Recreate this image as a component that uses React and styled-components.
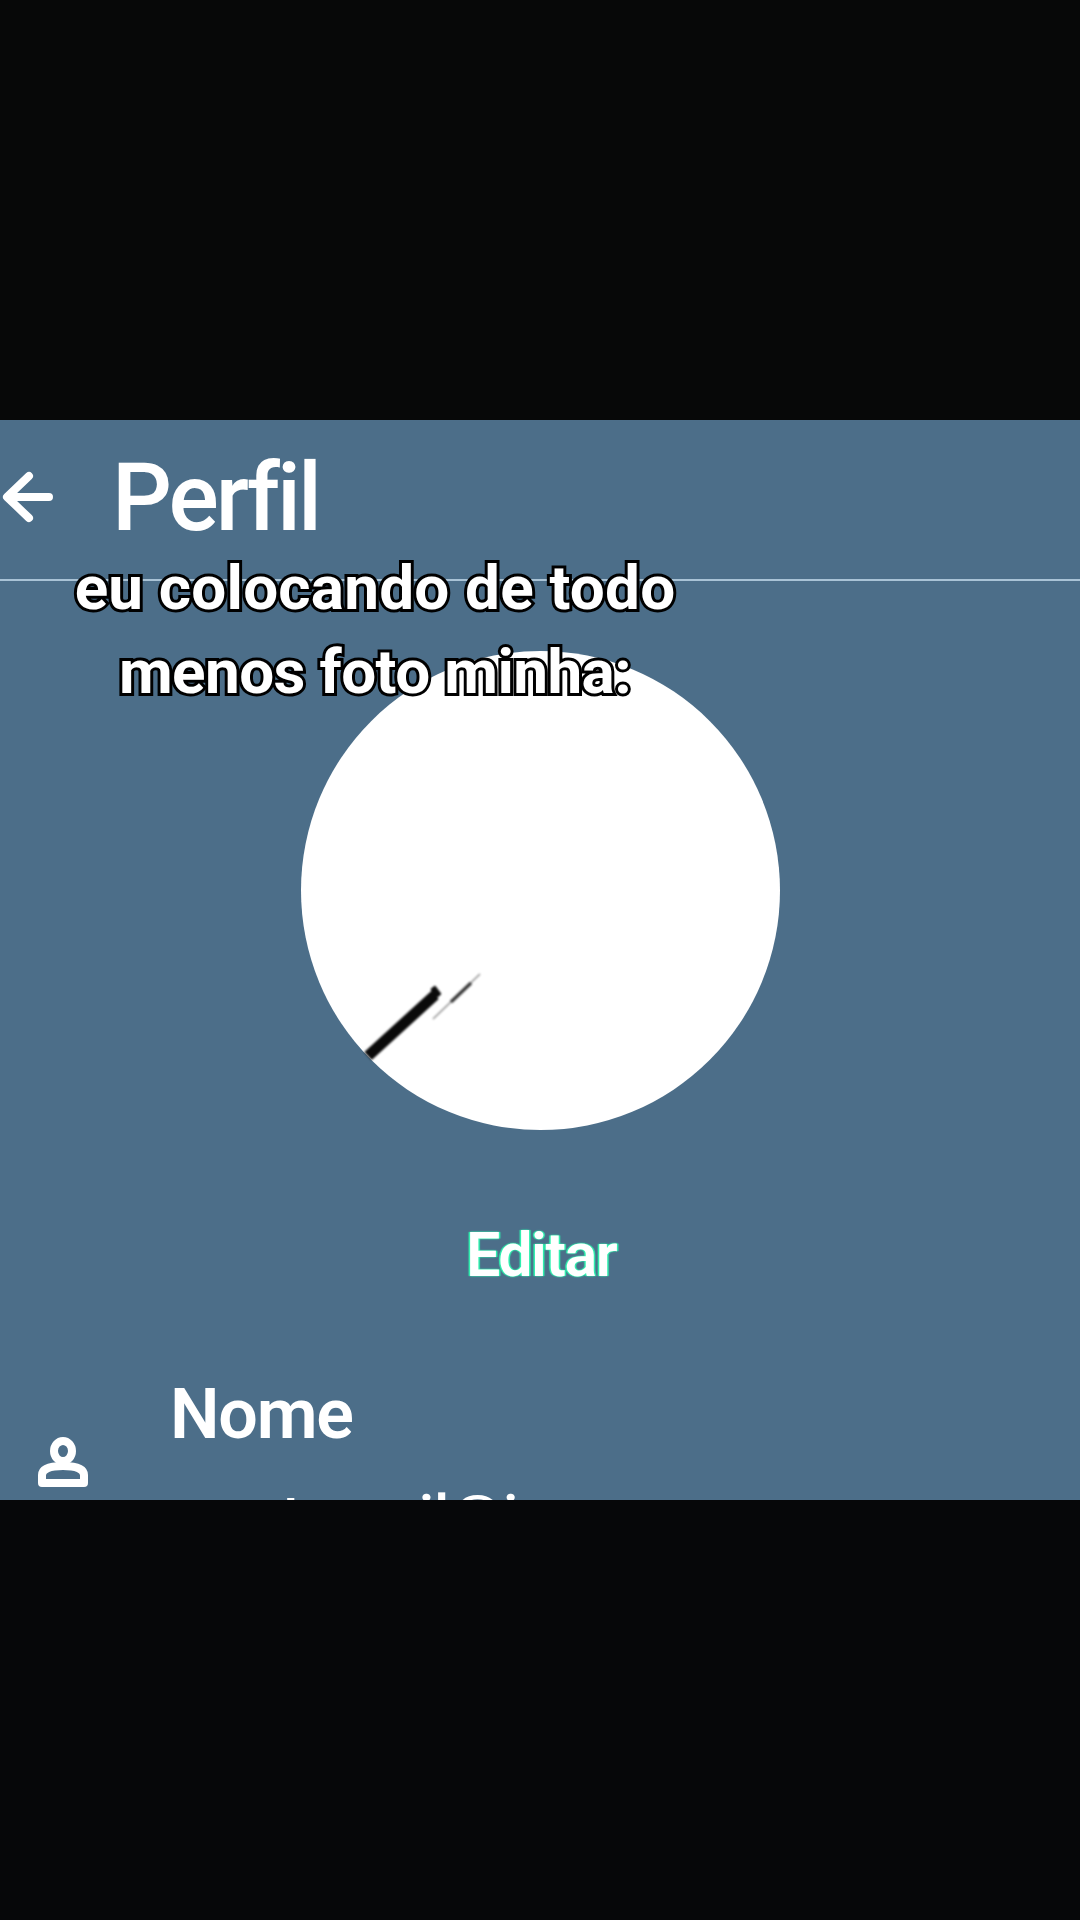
import React from "react";
import styled, { createGlobalStyle } from "styled-components";

const Global = createGlobalStyle`
  html, body { margin: 0; padding: 0; background: #060708; }
  body { font-family: Roboto, "Liberation Sans", sans-serif; }
`;
const Page = styled.div`
  position: relative;
  width: 1080px;
  height: 1920px;
  display: flex;
  flex-direction: column;
  background: linear-gradient(#070808 0 50%, #060709 50% 100%);
  overflow: hidden;
`;
const Panel = styled.main`
  margin-top: 420px;
  height: 1080px;
  background: #4c6e89;
  color: #fff;
  display: flex;
  flex-direction: column;
  overflow: hidden;
`;
const Header = styled.header`
  flex: none;
  height: 159px;
  display: flex;
  align-items: flex-start;
  border-bottom: 2px solid #a9c3d6;
`;
const BackIcon = styled.svg`
  width: 56px;
  height: 56px;
  margin: 49px 0 0 0;
  flex: none;
`;
const Title = styled.h1`
  margin: 23px 0 0 56px;
  font-size: 94px;
  line-height: 110px;
  font-weight: 500;
  letter-spacing: -3px;
`;
const Avatar = styled.div`
  position: relative;
  flex: none;
  width: 479px;
  height: 479px;
  margin: 70px 0 0 301px;
  border-radius: 50%;
  background: #fff;
`;
const Mark = styled.svg`
  position: absolute;
  left: 60px;
  top: 320px;
  width: 130px;
  height: 95px;
  filter: blur(0.8px);
`;
const EditLink = styled.div`
  margin-top: 90px;
  text-align: center;
  padding-left: 2px;
  font-size: 61px;
  line-height: 70px;
  font-weight: 600;
  letter-spacing: -1.5px;
  color: #fff;
  text-shadow: 0 0 2px #2ff5b0, 1.5px 0 1px #2ff5b0, -1.5px 0 1px #2ff5b0;
`;
const Row = styled.section`
  margin-top: 83px;
  display: flex;
  padding-left: 38px;
`;
const UserIcon = styled.svg`
  flex: none;
  width: 50px;
  height: 50px;
  margin-top: 64px;
`;
const Fields = styled.div`
  margin-left: 82px;
  display: flex;
  flex-direction: column;
`;
const Label = styled.div`
  font-size: 70px;
  line-height: 82px;
  font-weight: 600;
  letter-spacing: -1.2px;
`;
const Value = styled.div`
  margin: 27px 0 0 13px;
  font-size: 60px;
  line-height: 70px;
  font-weight: 500;
  white-space: nowrap;
`;
const Caption = styled.div`
  position: absolute;
  left: 0;
  top: 546px;
  width: 750px;
  text-align: center;
  font-family: Roboto, sans-serif;
  font-size: 62px;
  line-height: 84px;
  font-weight: 700;
  color: #fff;
  -webkit-text-stroke: 6px #000;
  paint-order: stroke fill;
`;
const CaptionLine = styled.div`
  letter-spacing: ${(p) => p.$spacing}px;
`;

export default function App() {
  return (
    <Page>
      <Global />
      <Panel>
        <Header>
          <BackIcon viewBox="0 0 56 56" fill="none" stroke="#fff" strokeWidth="8" strokeLinecap="round" strokeLinejoin="round">
            <path d="M49 28H8M29 7 7 28l22 21" />
          </BackIcon>
          <Title>Perfil</Title>
        </Header>
        <Avatar>
          <Mark viewBox="0 0 130 95" fill="none" stroke="#0a0a0a">
            <path d="M7 85 74 24" strokeWidth="11" />
            <path d="M70 18l4-3 6 8-6 5Z" fill="#0a0a0a" strokeWidth="1" />
            <path d="M72 48 119 3" strokeWidth="1.2" opacity=".5" />
            <path d="M90 31 110 12" strokeWidth="3.5" opacity=".75" />
          </Mark>
        </Avatar>
        <EditLink>Editar</EditLink>
        <Row>
          <UserIcon viewBox="0 0 50 50" fill="none" stroke="#fff" strokeWidth="8" strokeLinejoin="round">
            <ellipse cx="25" cy="14" rx="9" ry="10" />
            <path d="M4 46V38c0-6 8-9 21-9s21 3 21 9v8Z" />
          </UserIcon>
          <Fields>
            <Label>Nome</Label>
            <Value>contamail@i</Value>
          </Fields>
        </Row>
      </Panel>
      <Caption>
        <CaptionLine $spacing={0.2}>eu colocando de todo</CaptionLine>
        <CaptionLine $spacing={-0.6}>menos foto minha:</CaptionLine>
      </Caption>
    </Page>
  );
}
